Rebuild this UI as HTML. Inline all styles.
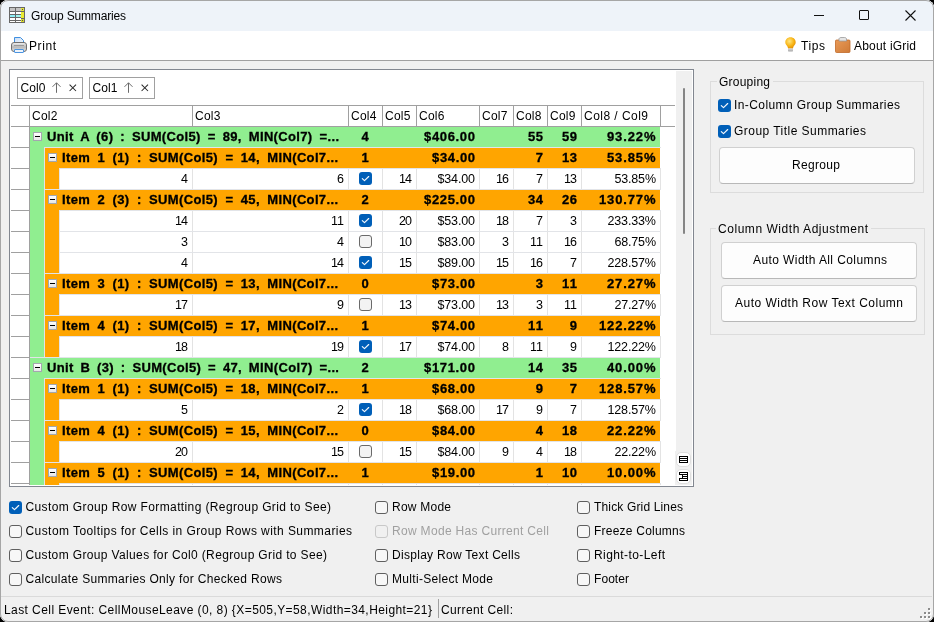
<!DOCTYPE html><html><head><meta charset="utf-8"><style>
html,body{margin:0;padding:0;width:934px;height:622px;overflow:hidden;background:#000}
body{position:relative;font-family:"Liberation Sans",sans-serif}
#w{position:absolute;left:0;top:0;width:934px;height:622px;border-radius:8px;overflow:hidden;background:#f0f0f0;will-change:transform}
#b{position:absolute;left:0;top:0;width:934px;height:622px;border-radius:8px;border:1px solid #a6a6a6;box-sizing:border-box}
</style></head><body><div id="w">
<div style="position:absolute;left:0px;top:0px;width:934px;height:622px;background:#f0f0f0"></div>
<div style="position:absolute;left:0px;top:0px;width:934px;height:31px;background:#eef3f9"></div>
<div style="position:absolute;left:0px;top:31px;width:934px;height:30px;background:#ffffff"></div>
<div style="position:absolute;left:0px;top:60px;width:934px;height:1px;background:#a0a0a0"></div>
<svg style="position:absolute;left:9px;top:7px" width="16" height="16" viewBox="0 0 16 16" shape-rendering="crispEdges">
<rect x="0" y="0" width="16" height="16" fill="#676767"/>
<rect x="1" y="1" width="5" height="3" fill="#c4c4c4"/><rect x="7" y="1" width="5" height="3" fill="#c4c4c4"/>
<rect x="1" y="5" width="5" height="2" fill="#fff"/><rect x="7" y="5" width="5" height="2" fill="#fff"/>
<rect x="1" y="8" width="5" height="2" fill="#8ff0f8"/><rect x="7" y="8" width="5" height="2" fill="#a0f4ee"/>
<rect x="1" y="11" width="5" height="2" fill="#fff"/><rect x="7" y="11" width="5" height="2" fill="#fff"/>
<rect x="1" y="14" width="5" height="1" fill="#fff"/><rect x="7" y="14" width="5" height="1" fill="#fff"/>
<rect x="12" y="1" width="3" height="3" fill="#e6e63a"/><rect x="13" y="2" width="1" height="1" fill="#555"/>
<rect x="12" y="5" width="3" height="6" fill="#eaea30"/>
<rect x="12" y="12" width="3" height="3" fill="#d8d82a"/><rect x="13" y="13" width="1" height="1" fill="#555"/>
</svg>
<div style="position:absolute;left:814px;top:15px;width:10px;height:1px;background:#111"></div>
<div style="position:absolute;left:859px;top:10px;width:10px;height:10px;border:1px solid #111;box-sizing:border-box;border-radius:1px"></div>
<svg style="position:absolute;left:905px;top:10px" width="11" height="11" viewBox="0 0 11 11">
<path d="M0.5 0.5 L10.5 10.5 M10.5 0.5 L0.5 10.5" stroke="#111" stroke-width="1.1"/></svg>
<svg style="position:absolute;left:11px;top:37px" width="16" height="16" viewBox="0 0 16 16">
<defs><linearGradient id="pg" x1="0" y1="0" x2="0" y2="1"><stop offset="0" stop-color="#f4f4f4"/><stop offset="0.5" stop-color="#b9b9b9"/><stop offset="1" stop-color="#e8e8e8"/></linearGradient>
<linearGradient id="pp" x1="0" y1="0" x2="1" y2="1"><stop offset="0" stop-color="#c9ddf5"/><stop offset="1" stop-color="#eef5fd"/></linearGradient></defs>
<path d="M3.5 6 V0.5 H9.5 L12.5 3.5 V6" fill="url(#pp)" stroke="#3f8fe0"/>
<rect x="0.5" y="5.5" width="15" height="9" rx="2.5" fill="url(#pg)" stroke="#707070"/>
<rect x="3" y="8" width="10" height="1" fill="#9a9a9a"/>
<rect x="3.5" y="12.5" width="9" height="3" rx="0.5" fill="#eef4fb" stroke="#4b94e0"/>
</svg>
<svg style="position:absolute;left:785px;top:37px" width="11" height="16" viewBox="0 0 11 16">
<defs><radialGradient id="bg" cx="0.4" cy="0.35" r="0.7"><stop offset="0" stop-color="#ffe680"/><stop offset="0.6" stop-color="#f8b414"/><stop offset="1" stop-color="#e08a00"/></radialGradient></defs>
<path d="M5.5 0.3 C8.6 0.3 10.7 2.5 10.7 5.3 C10.7 7.4 9.2 8.4 8.3 10 L8 11.5 H3 L2.7 10 C1.8 8.4 0.3 7.4 0.3 5.3 C0.3 2.5 2.4 0.3 5.5 0.3 Z" fill="url(#bg)"/>
<rect x="3" y="11.5" width="5" height="3.5" rx="1" fill="#d2d2d2"/><rect x="3" y="12.8" width="5" height="0.8" fill="#a8a8a8"/>
</svg>
<svg style="position:absolute;left:835px;top:37px" width="16" height="16" viewBox="0 0 16 16">
<defs><linearGradient id="cb" x1="0" y1="0" x2="1" y2="1"><stop offset="0" stop-color="#e89a58"/><stop offset="1" stop-color="#cf7a36"/></linearGradient></defs>
<rect x="0.5" y="3" width="14.5" height="12.5" rx="1" fill="url(#cb)" stroke="#c06a28" stroke-width="0.8"/>
<path d="M4 4 V2 C4 1 5 0.5 6 0.5 H9.5 C10.5 0.5 11.5 1 11.5 2 V4 Z" fill="#e4e4e4" stroke="#9a9a9a" stroke-width="0.8"/>
</svg>
<div style="position:absolute;left:9px;top:69px;width:685px;height:418px;background:#fff;border:1px solid #828790;box-sizing:border-box"></div>
<div style="position:absolute;left:676px;top:71px;width:16px;height:414px;background:#f0f0f0"></div>
<div style="position:absolute;left:683px;top:88px;width:2px;height:146px;background:#858585;border-radius:1px"></div>
<div style="position:absolute;left:675px;top:451px;width:1px;height:34px;background:#f0f0f0"></div>
<div style="position:absolute;left:676px;top:452px;width:15px;height:15px;background:#fff;border:1px solid #dedede;box-sizing:border-box;border-radius:5px"></div>
<div style="position:absolute;left:676px;top:469px;width:15px;height:15px;background:#fff;border:1px solid #dedede;box-sizing:border-box;border-radius:5px"></div>
<div style="position:absolute;left:679px;top:456px;width:9px;height:7px;background:#000"></div>
<div style="position:absolute;left:680px;top:457px;width:7px;height:1px;background:#fff"></div>
<div style="position:absolute;left:680px;top:459px;width:7px;height:1px;background:#fff"></div>
<div style="position:absolute;left:680px;top:461px;width:7px;height:1px;background:#fff"></div>
<div style="position:absolute;left:679px;top:472px;width:9px;height:9px;background:#000"></div>
<div style="position:absolute;left:679px;top:475px;width:3px;height:3px;background:#fff"></div>
<div style="position:absolute;left:680px;top:473px;width:7px;height:1px;background:#fff"></div>
<div style="position:absolute;left:683px;top:475px;width:4px;height:1px;background:#fff"></div>
<div style="position:absolute;left:683px;top:477px;width:4px;height:1px;background:#fff"></div>
<div style="position:absolute;left:680px;top:479px;width:7px;height:1px;background:#fff"></div>
<div style="position:absolute;left:17px;top:77px;width:66px;height:22px;border:1px solid #a0a0a0;box-sizing:border-box"></div>
<svg style="position:absolute;left:52px;top:82px" width="10" height="11" viewBox="0 0 10 11">
<path d="M4.5 0.8 V10.8 M0.5 4.8 L4.5 0.8 L8.5 4.8" fill="none" stroke="#6a6a6a" stroke-width="1"/></svg>
<svg style="position:absolute;left:69px;top:84px" width="8" height="8" viewBox="0 0 8 8">
<path d="M0.6 0.6 L7 7 M7 0.6 L0.6 7" fill="none" stroke="#2a2a2a" stroke-width="1.05"/></svg>
<div style="position:absolute;left:89px;top:77px;width:66px;height:22px;border:1px solid #a0a0a0;box-sizing:border-box"></div>
<svg style="position:absolute;left:124px;top:82px" width="10" height="11" viewBox="0 0 10 11">
<path d="M4.5 0.8 V10.8 M0.5 4.8 L4.5 0.8 L8.5 4.8" fill="none" stroke="#6a6a6a" stroke-width="1"/></svg>
<svg style="position:absolute;left:141px;top:84px" width="8" height="8" viewBox="0 0 8 8">
<path d="M0.6 0.6 L7 7 M7 0.6 L0.6 7" fill="none" stroke="#2a2a2a" stroke-width="1.05"/></svg>
<div style="position:absolute;left:11px;top:105px;width:664px;height:1px;background:#a0a0a0"></div>
<div style="position:absolute;left:11px;top:126px;width:664px;height:1px;background:#a0a0a0"></div>
<div style="position:absolute;left:192px;top:105px;width:1px;height:21px;background:#a0a0a0"></div>
<div style="position:absolute;left:348px;top:105px;width:1px;height:21px;background:#a0a0a0"></div>
<div style="position:absolute;left:382px;top:105px;width:1px;height:21px;background:#a0a0a0"></div>
<div style="position:absolute;left:416px;top:105px;width:1px;height:21px;background:#a0a0a0"></div>
<div style="position:absolute;left:479px;top:105px;width:1px;height:21px;background:#a0a0a0"></div>
<div style="position:absolute;left:513px;top:105px;width:1px;height:21px;background:#a0a0a0"></div>
<div style="position:absolute;left:547px;top:105px;width:1px;height:21px;background:#a0a0a0"></div>
<div style="position:absolute;left:581px;top:105px;width:1px;height:21px;background:#a0a0a0"></div>
<div style="position:absolute;left:660px;top:105px;width:1px;height:21px;background:#a0a0a0"></div>
<div style="position:absolute;left:29px;top:105px;width:1px;height:21px;background:#a0a0a0"></div>
<div style="position:absolute;left:11px;top:147px;width:18px;height:1px;background:#a0a0a0"></div>
<div style="position:absolute;left:30px;top:127px;width:630px;height:21px;background:#90ee90"></div>
<div style="position:absolute;left:33px;top:132px;width:9px;height:9px;background:linear-gradient(#fff,#e6e6e6);border:1px solid #a3a7ae;box-sizing:border-box"></div>
<div style="position:absolute;left:35px;top:136px;width:5px;height:1px;background:#000"></div>
<div style="position:absolute;left:44px;top:147px;width:617px;height:1px;background:#e2e4e8"></div>
<div style="position:absolute;left:11px;top:168px;width:18px;height:1px;background:#a0a0a0"></div>
<div style="position:absolute;left:30px;top:148px;width:14px;height:21px;background:#90ee90"></div>
<div style="position:absolute;left:44px;top:148px;width:1px;height:21px;background:#e2e4e8"></div>
<div style="position:absolute;left:45px;top:148px;width:615px;height:21px;background:#ffa500"></div>
<div style="position:absolute;left:48px;top:153px;width:9px;height:9px;background:linear-gradient(#fff,#e6e6e6);border:1px solid #a3a7ae;box-sizing:border-box"></div>
<div style="position:absolute;left:50px;top:157px;width:5px;height:1px;background:#000"></div>
<div style="position:absolute;left:59px;top:168px;width:602px;height:1px;background:#e2e4e8"></div>
<div style="position:absolute;left:11px;top:189px;width:18px;height:1px;background:#a0a0a0"></div>
<div style="position:absolute;left:30px;top:169px;width:14px;height:21px;background:#90ee90"></div>
<div style="position:absolute;left:44px;top:169px;width:1px;height:21px;background:#e2e4e8"></div>
<div style="position:absolute;left:45px;top:169px;width:14px;height:21px;background:#ffa500"></div>
<div style="position:absolute;left:59px;top:169px;width:1px;height:20px;background:#e2e4e8"></div>
<div style="position:absolute;left:192px;top:169px;width:1px;height:20px;background:#e3e3e3"></div>
<div style="position:absolute;left:348px;top:169px;width:1px;height:20px;background:#e3e3e3"></div>
<div style="position:absolute;left:382px;top:169px;width:1px;height:20px;background:#e3e3e3"></div>
<div style="position:absolute;left:416px;top:169px;width:1px;height:20px;background:#e3e3e3"></div>
<div style="position:absolute;left:479px;top:169px;width:1px;height:20px;background:#e3e3e3"></div>
<div style="position:absolute;left:513px;top:169px;width:1px;height:20px;background:#e3e3e3"></div>
<div style="position:absolute;left:547px;top:169px;width:1px;height:20px;background:#e3e3e3"></div>
<div style="position:absolute;left:581px;top:169px;width:1px;height:20px;background:#e3e3e3"></div>
<div style="position:absolute;left:660px;top:169px;width:1px;height:20px;background:#e3e3e3"></div>
<div style="position:absolute;left:359px;top:172px;width:13px;height:13px;background:#005fb8;border-radius:3px"></div>
<svg style="position:absolute;left:359px;top:172px" width="13" height="13" viewBox="0 0 13 13"><path d="M3.3 6.6 L5.5 8.7 L9.7 4.5" fill="none" stroke="#f4f8fc" stroke-width="1.15" stroke-linecap="round" stroke-linejoin="round"/></svg>
<div style="position:absolute;left:44px;top:189px;width:617px;height:1px;background:#e2e4e8"></div>
<div style="position:absolute;left:11px;top:210px;width:18px;height:1px;background:#a0a0a0"></div>
<div style="position:absolute;left:30px;top:190px;width:14px;height:21px;background:#90ee90"></div>
<div style="position:absolute;left:44px;top:190px;width:1px;height:21px;background:#e2e4e8"></div>
<div style="position:absolute;left:45px;top:190px;width:615px;height:21px;background:#ffa500"></div>
<div style="position:absolute;left:48px;top:195px;width:9px;height:9px;background:linear-gradient(#fff,#e6e6e6);border:1px solid #a3a7ae;box-sizing:border-box"></div>
<div style="position:absolute;left:50px;top:199px;width:5px;height:1px;background:#000"></div>
<div style="position:absolute;left:59px;top:210px;width:602px;height:1px;background:#e2e4e8"></div>
<div style="position:absolute;left:11px;top:231px;width:18px;height:1px;background:#a0a0a0"></div>
<div style="position:absolute;left:30px;top:211px;width:14px;height:21px;background:#90ee90"></div>
<div style="position:absolute;left:44px;top:211px;width:1px;height:21px;background:#e2e4e8"></div>
<div style="position:absolute;left:45px;top:211px;width:14px;height:21px;background:#ffa500"></div>
<div style="position:absolute;left:59px;top:211px;width:1px;height:20px;background:#e2e4e8"></div>
<div style="position:absolute;left:192px;top:211px;width:1px;height:20px;background:#e3e3e3"></div>
<div style="position:absolute;left:348px;top:211px;width:1px;height:20px;background:#e3e3e3"></div>
<div style="position:absolute;left:382px;top:211px;width:1px;height:20px;background:#e3e3e3"></div>
<div style="position:absolute;left:416px;top:211px;width:1px;height:20px;background:#e3e3e3"></div>
<div style="position:absolute;left:479px;top:211px;width:1px;height:20px;background:#e3e3e3"></div>
<div style="position:absolute;left:513px;top:211px;width:1px;height:20px;background:#e3e3e3"></div>
<div style="position:absolute;left:547px;top:211px;width:1px;height:20px;background:#e3e3e3"></div>
<div style="position:absolute;left:581px;top:211px;width:1px;height:20px;background:#e3e3e3"></div>
<div style="position:absolute;left:660px;top:211px;width:1px;height:20px;background:#e3e3e3"></div>
<div style="position:absolute;left:359px;top:214px;width:13px;height:13px;background:#005fb8;border-radius:3px"></div>
<svg style="position:absolute;left:359px;top:214px" width="13" height="13" viewBox="0 0 13 13"><path d="M3.3 6.6 L5.5 8.7 L9.7 4.5" fill="none" stroke="#f4f8fc" stroke-width="1.15" stroke-linecap="round" stroke-linejoin="round"/></svg>
<div style="position:absolute;left:59px;top:231px;width:602px;height:1px;background:#e2e4e8"></div>
<div style="position:absolute;left:11px;top:252px;width:18px;height:1px;background:#a0a0a0"></div>
<div style="position:absolute;left:30px;top:232px;width:14px;height:21px;background:#90ee90"></div>
<div style="position:absolute;left:44px;top:232px;width:1px;height:21px;background:#e2e4e8"></div>
<div style="position:absolute;left:45px;top:232px;width:14px;height:21px;background:#ffa500"></div>
<div style="position:absolute;left:59px;top:232px;width:1px;height:20px;background:#e2e4e8"></div>
<div style="position:absolute;left:192px;top:232px;width:1px;height:20px;background:#e3e3e3"></div>
<div style="position:absolute;left:348px;top:232px;width:1px;height:20px;background:#e3e3e3"></div>
<div style="position:absolute;left:382px;top:232px;width:1px;height:20px;background:#e3e3e3"></div>
<div style="position:absolute;left:416px;top:232px;width:1px;height:20px;background:#e3e3e3"></div>
<div style="position:absolute;left:479px;top:232px;width:1px;height:20px;background:#e3e3e3"></div>
<div style="position:absolute;left:513px;top:232px;width:1px;height:20px;background:#e3e3e3"></div>
<div style="position:absolute;left:547px;top:232px;width:1px;height:20px;background:#e3e3e3"></div>
<div style="position:absolute;left:581px;top:232px;width:1px;height:20px;background:#e3e3e3"></div>
<div style="position:absolute;left:660px;top:232px;width:1px;height:20px;background:#e3e3e3"></div>
<div style="position:absolute;left:359px;top:235px;width:13px;height:13px;background:#f3f3f3;border:1px solid #6a6a6a;box-sizing:border-box;border-radius:3px"></div>
<div style="position:absolute;left:59px;top:252px;width:602px;height:1px;background:#e2e4e8"></div>
<div style="position:absolute;left:11px;top:273px;width:18px;height:1px;background:#a0a0a0"></div>
<div style="position:absolute;left:30px;top:253px;width:14px;height:21px;background:#90ee90"></div>
<div style="position:absolute;left:44px;top:253px;width:1px;height:21px;background:#e2e4e8"></div>
<div style="position:absolute;left:45px;top:253px;width:14px;height:21px;background:#ffa500"></div>
<div style="position:absolute;left:59px;top:253px;width:1px;height:20px;background:#e2e4e8"></div>
<div style="position:absolute;left:192px;top:253px;width:1px;height:20px;background:#e3e3e3"></div>
<div style="position:absolute;left:348px;top:253px;width:1px;height:20px;background:#e3e3e3"></div>
<div style="position:absolute;left:382px;top:253px;width:1px;height:20px;background:#e3e3e3"></div>
<div style="position:absolute;left:416px;top:253px;width:1px;height:20px;background:#e3e3e3"></div>
<div style="position:absolute;left:479px;top:253px;width:1px;height:20px;background:#e3e3e3"></div>
<div style="position:absolute;left:513px;top:253px;width:1px;height:20px;background:#e3e3e3"></div>
<div style="position:absolute;left:547px;top:253px;width:1px;height:20px;background:#e3e3e3"></div>
<div style="position:absolute;left:581px;top:253px;width:1px;height:20px;background:#e3e3e3"></div>
<div style="position:absolute;left:660px;top:253px;width:1px;height:20px;background:#e3e3e3"></div>
<div style="position:absolute;left:359px;top:256px;width:13px;height:13px;background:#005fb8;border-radius:3px"></div>
<svg style="position:absolute;left:359px;top:256px" width="13" height="13" viewBox="0 0 13 13"><path d="M3.3 6.6 L5.5 8.7 L9.7 4.5" fill="none" stroke="#f4f8fc" stroke-width="1.15" stroke-linecap="round" stroke-linejoin="round"/></svg>
<div style="position:absolute;left:44px;top:273px;width:617px;height:1px;background:#e2e4e8"></div>
<div style="position:absolute;left:11px;top:294px;width:18px;height:1px;background:#a0a0a0"></div>
<div style="position:absolute;left:30px;top:274px;width:14px;height:21px;background:#90ee90"></div>
<div style="position:absolute;left:44px;top:274px;width:1px;height:21px;background:#e2e4e8"></div>
<div style="position:absolute;left:45px;top:274px;width:615px;height:21px;background:#ffa500"></div>
<div style="position:absolute;left:48px;top:279px;width:9px;height:9px;background:linear-gradient(#fff,#e6e6e6);border:1px solid #a3a7ae;box-sizing:border-box"></div>
<div style="position:absolute;left:50px;top:283px;width:5px;height:1px;background:#000"></div>
<div style="position:absolute;left:59px;top:294px;width:602px;height:1px;background:#e2e4e8"></div>
<div style="position:absolute;left:11px;top:315px;width:18px;height:1px;background:#a0a0a0"></div>
<div style="position:absolute;left:30px;top:295px;width:14px;height:21px;background:#90ee90"></div>
<div style="position:absolute;left:44px;top:295px;width:1px;height:21px;background:#e2e4e8"></div>
<div style="position:absolute;left:45px;top:295px;width:14px;height:21px;background:#ffa500"></div>
<div style="position:absolute;left:59px;top:295px;width:1px;height:20px;background:#e2e4e8"></div>
<div style="position:absolute;left:192px;top:295px;width:1px;height:20px;background:#e3e3e3"></div>
<div style="position:absolute;left:348px;top:295px;width:1px;height:20px;background:#e3e3e3"></div>
<div style="position:absolute;left:382px;top:295px;width:1px;height:20px;background:#e3e3e3"></div>
<div style="position:absolute;left:416px;top:295px;width:1px;height:20px;background:#e3e3e3"></div>
<div style="position:absolute;left:479px;top:295px;width:1px;height:20px;background:#e3e3e3"></div>
<div style="position:absolute;left:513px;top:295px;width:1px;height:20px;background:#e3e3e3"></div>
<div style="position:absolute;left:547px;top:295px;width:1px;height:20px;background:#e3e3e3"></div>
<div style="position:absolute;left:581px;top:295px;width:1px;height:20px;background:#e3e3e3"></div>
<div style="position:absolute;left:660px;top:295px;width:1px;height:20px;background:#e3e3e3"></div>
<div style="position:absolute;left:359px;top:298px;width:13px;height:13px;background:#f3f3f3;border:1px solid #6a6a6a;box-sizing:border-box;border-radius:3px"></div>
<div style="position:absolute;left:44px;top:315px;width:617px;height:1px;background:#e2e4e8"></div>
<div style="position:absolute;left:11px;top:336px;width:18px;height:1px;background:#a0a0a0"></div>
<div style="position:absolute;left:30px;top:316px;width:14px;height:21px;background:#90ee90"></div>
<div style="position:absolute;left:44px;top:316px;width:1px;height:21px;background:#e2e4e8"></div>
<div style="position:absolute;left:45px;top:316px;width:615px;height:21px;background:#ffa500"></div>
<div style="position:absolute;left:48px;top:321px;width:9px;height:9px;background:linear-gradient(#fff,#e6e6e6);border:1px solid #a3a7ae;box-sizing:border-box"></div>
<div style="position:absolute;left:50px;top:325px;width:5px;height:1px;background:#000"></div>
<div style="position:absolute;left:59px;top:336px;width:602px;height:1px;background:#e2e4e8"></div>
<div style="position:absolute;left:11px;top:357px;width:18px;height:1px;background:#a0a0a0"></div>
<div style="position:absolute;left:30px;top:337px;width:14px;height:21px;background:#90ee90"></div>
<div style="position:absolute;left:44px;top:337px;width:1px;height:21px;background:#e2e4e8"></div>
<div style="position:absolute;left:45px;top:337px;width:14px;height:21px;background:#ffa500"></div>
<div style="position:absolute;left:59px;top:337px;width:1px;height:20px;background:#e2e4e8"></div>
<div style="position:absolute;left:192px;top:337px;width:1px;height:20px;background:#e3e3e3"></div>
<div style="position:absolute;left:348px;top:337px;width:1px;height:20px;background:#e3e3e3"></div>
<div style="position:absolute;left:382px;top:337px;width:1px;height:20px;background:#e3e3e3"></div>
<div style="position:absolute;left:416px;top:337px;width:1px;height:20px;background:#e3e3e3"></div>
<div style="position:absolute;left:479px;top:337px;width:1px;height:20px;background:#e3e3e3"></div>
<div style="position:absolute;left:513px;top:337px;width:1px;height:20px;background:#e3e3e3"></div>
<div style="position:absolute;left:547px;top:337px;width:1px;height:20px;background:#e3e3e3"></div>
<div style="position:absolute;left:581px;top:337px;width:1px;height:20px;background:#e3e3e3"></div>
<div style="position:absolute;left:660px;top:337px;width:1px;height:20px;background:#e3e3e3"></div>
<div style="position:absolute;left:359px;top:340px;width:13px;height:13px;background:#005fb8;border-radius:3px"></div>
<svg style="position:absolute;left:359px;top:340px" width="13" height="13" viewBox="0 0 13 13"><path d="M3.3 6.6 L5.5 8.7 L9.7 4.5" fill="none" stroke="#f4f8fc" stroke-width="1.15" stroke-linecap="round" stroke-linejoin="round"/></svg>
<div style="position:absolute;left:29px;top:357px;width:632px;height:1px;background:#e2e4e8"></div>
<div style="position:absolute;left:11px;top:378px;width:18px;height:1px;background:#a0a0a0"></div>
<div style="position:absolute;left:30px;top:358px;width:630px;height:21px;background:#90ee90"></div>
<div style="position:absolute;left:33px;top:363px;width:9px;height:9px;background:linear-gradient(#fff,#e6e6e6);border:1px solid #a3a7ae;box-sizing:border-box"></div>
<div style="position:absolute;left:35px;top:367px;width:5px;height:1px;background:#000"></div>
<div style="position:absolute;left:44px;top:378px;width:617px;height:1px;background:#e2e4e8"></div>
<div style="position:absolute;left:11px;top:399px;width:18px;height:1px;background:#a0a0a0"></div>
<div style="position:absolute;left:30px;top:379px;width:14px;height:21px;background:#90ee90"></div>
<div style="position:absolute;left:44px;top:379px;width:1px;height:21px;background:#e2e4e8"></div>
<div style="position:absolute;left:45px;top:379px;width:615px;height:21px;background:#ffa500"></div>
<div style="position:absolute;left:48px;top:384px;width:9px;height:9px;background:linear-gradient(#fff,#e6e6e6);border:1px solid #a3a7ae;box-sizing:border-box"></div>
<div style="position:absolute;left:50px;top:388px;width:5px;height:1px;background:#000"></div>
<div style="position:absolute;left:59px;top:399px;width:602px;height:1px;background:#e2e4e8"></div>
<div style="position:absolute;left:11px;top:420px;width:18px;height:1px;background:#a0a0a0"></div>
<div style="position:absolute;left:30px;top:400px;width:14px;height:21px;background:#90ee90"></div>
<div style="position:absolute;left:44px;top:400px;width:1px;height:21px;background:#e2e4e8"></div>
<div style="position:absolute;left:45px;top:400px;width:14px;height:21px;background:#ffa500"></div>
<div style="position:absolute;left:59px;top:400px;width:1px;height:20px;background:#e2e4e8"></div>
<div style="position:absolute;left:192px;top:400px;width:1px;height:20px;background:#e3e3e3"></div>
<div style="position:absolute;left:348px;top:400px;width:1px;height:20px;background:#e3e3e3"></div>
<div style="position:absolute;left:382px;top:400px;width:1px;height:20px;background:#e3e3e3"></div>
<div style="position:absolute;left:416px;top:400px;width:1px;height:20px;background:#e3e3e3"></div>
<div style="position:absolute;left:479px;top:400px;width:1px;height:20px;background:#e3e3e3"></div>
<div style="position:absolute;left:513px;top:400px;width:1px;height:20px;background:#e3e3e3"></div>
<div style="position:absolute;left:547px;top:400px;width:1px;height:20px;background:#e3e3e3"></div>
<div style="position:absolute;left:581px;top:400px;width:1px;height:20px;background:#e3e3e3"></div>
<div style="position:absolute;left:660px;top:400px;width:1px;height:20px;background:#e3e3e3"></div>
<div style="position:absolute;left:359px;top:403px;width:13px;height:13px;background:#005fb8;border-radius:3px"></div>
<svg style="position:absolute;left:359px;top:403px" width="13" height="13" viewBox="0 0 13 13"><path d="M3.3 6.6 L5.5 8.7 L9.7 4.5" fill="none" stroke="#f4f8fc" stroke-width="1.15" stroke-linecap="round" stroke-linejoin="round"/></svg>
<div style="position:absolute;left:44px;top:420px;width:617px;height:1px;background:#e2e4e8"></div>
<div style="position:absolute;left:11px;top:441px;width:18px;height:1px;background:#a0a0a0"></div>
<div style="position:absolute;left:30px;top:421px;width:14px;height:21px;background:#90ee90"></div>
<div style="position:absolute;left:44px;top:421px;width:1px;height:21px;background:#e2e4e8"></div>
<div style="position:absolute;left:45px;top:421px;width:615px;height:21px;background:#ffa500"></div>
<div style="position:absolute;left:48px;top:426px;width:9px;height:9px;background:linear-gradient(#fff,#e6e6e6);border:1px solid #a3a7ae;box-sizing:border-box"></div>
<div style="position:absolute;left:50px;top:430px;width:5px;height:1px;background:#000"></div>
<div style="position:absolute;left:59px;top:441px;width:602px;height:1px;background:#e2e4e8"></div>
<div style="position:absolute;left:11px;top:462px;width:18px;height:1px;background:#a0a0a0"></div>
<div style="position:absolute;left:30px;top:442px;width:14px;height:21px;background:#90ee90"></div>
<div style="position:absolute;left:44px;top:442px;width:1px;height:21px;background:#e2e4e8"></div>
<div style="position:absolute;left:45px;top:442px;width:14px;height:21px;background:#ffa500"></div>
<div style="position:absolute;left:59px;top:442px;width:1px;height:20px;background:#e2e4e8"></div>
<div style="position:absolute;left:192px;top:442px;width:1px;height:20px;background:#e3e3e3"></div>
<div style="position:absolute;left:348px;top:442px;width:1px;height:20px;background:#e3e3e3"></div>
<div style="position:absolute;left:382px;top:442px;width:1px;height:20px;background:#e3e3e3"></div>
<div style="position:absolute;left:416px;top:442px;width:1px;height:20px;background:#e3e3e3"></div>
<div style="position:absolute;left:479px;top:442px;width:1px;height:20px;background:#e3e3e3"></div>
<div style="position:absolute;left:513px;top:442px;width:1px;height:20px;background:#e3e3e3"></div>
<div style="position:absolute;left:547px;top:442px;width:1px;height:20px;background:#e3e3e3"></div>
<div style="position:absolute;left:581px;top:442px;width:1px;height:20px;background:#e3e3e3"></div>
<div style="position:absolute;left:660px;top:442px;width:1px;height:20px;background:#e3e3e3"></div>
<div style="position:absolute;left:359px;top:445px;width:13px;height:13px;background:#f3f3f3;border:1px solid #6a6a6a;box-sizing:border-box;border-radius:3px"></div>
<div style="position:absolute;left:44px;top:462px;width:617px;height:1px;background:#e2e4e8"></div>
<div style="position:absolute;left:11px;top:483px;width:18px;height:1px;background:#a0a0a0"></div>
<div style="position:absolute;left:30px;top:463px;width:14px;height:21px;background:#90ee90"></div>
<div style="position:absolute;left:44px;top:463px;width:1px;height:21px;background:#e2e4e8"></div>
<div style="position:absolute;left:45px;top:463px;width:615px;height:21px;background:#ffa500"></div>
<div style="position:absolute;left:48px;top:468px;width:9px;height:9px;background:linear-gradient(#fff,#e6e6e6);border:1px solid #a3a7ae;box-sizing:border-box"></div>
<div style="position:absolute;left:50px;top:472px;width:5px;height:1px;background:#000"></div>
<div style="position:absolute;left:59px;top:483px;width:602px;height:1px;background:#e2e4e8"></div>
<div style="position:absolute;left:30px;top:484px;width:14px;height:1px;background:#90ee90"></div>
<div style="position:absolute;left:44px;top:484px;width:1px;height:1px;background:#e2e4e8"></div>
<div style="position:absolute;left:45px;top:484px;width:14px;height:1px;background:#ffa500"></div>
<div style="position:absolute;left:59px;top:484px;width:1px;height:1px;background:#e2e4e8"></div>
<div style="position:absolute;left:192px;top:484px;width:1px;height:1px;background:#e3e3e3"></div>
<div style="position:absolute;left:348px;top:484px;width:1px;height:1px;background:#e3e3e3"></div>
<div style="position:absolute;left:382px;top:484px;width:1px;height:1px;background:#e3e3e3"></div>
<div style="position:absolute;left:416px;top:484px;width:1px;height:1px;background:#e3e3e3"></div>
<div style="position:absolute;left:479px;top:484px;width:1px;height:1px;background:#e3e3e3"></div>
<div style="position:absolute;left:513px;top:484px;width:1px;height:1px;background:#e3e3e3"></div>
<div style="position:absolute;left:547px;top:484px;width:1px;height:1px;background:#e3e3e3"></div>
<div style="position:absolute;left:581px;top:484px;width:1px;height:1px;background:#e3e3e3"></div>
<div style="position:absolute;left:660px;top:484px;width:1px;height:1px;background:#e3e3e3"></div>
<div style="position:absolute;left:29px;top:127px;width:1px;height:358px;background:#a0a0a0"></div>
<div style="position:absolute;left:710px;top:81px;width:214px;height:112px;border:1px solid #dcdcdc;box-sizing:border-box"></div>
<div style="position:absolute;left:717px;top:79px;width:56px;height:5px;background:#f0f0f0"></div>
<div style="position:absolute;left:718px;top:99px;width:13px;height:13px;background:#005fb8;border-radius:3px"></div>
<svg style="position:absolute;left:718px;top:99px" width="13" height="13" viewBox="0 0 13 13"><path d="M3.3 6.6 L5.5 8.7 L9.7 4.5" fill="none" stroke="#f4f8fc" stroke-width="1.15" stroke-linecap="round" stroke-linejoin="round"/></svg>
<div style="position:absolute;left:718px;top:125px;width:13px;height:13px;background:#005fb8;border-radius:3px"></div>
<svg style="position:absolute;left:718px;top:125px" width="13" height="13" viewBox="0 0 13 13"><path d="M3.3 6.6 L5.5 8.7 L9.7 4.5" fill="none" stroke="#f4f8fc" stroke-width="1.15" stroke-linecap="round" stroke-linejoin="round"/></svg>
<div style="position:absolute;left:719px;top:147px;width:196px;height:37px;background:#fdfdfd;border:1px solid #d0d0d0;border-bottom-color:#b8b8b8;box-sizing:border-box;border-radius:4px"></div>
<div style="position:absolute;left:710px;top:228px;width:215px;height:107px;border:1px solid #dcdcdc;box-sizing:border-box"></div>
<div style="position:absolute;left:716px;top:226px;width:155px;height:5px;background:#f0f0f0"></div>
<div style="position:absolute;left:721px;top:242px;width:196px;height:37px;background:#fdfdfd;border:1px solid #d0d0d0;border-bottom-color:#b8b8b8;box-sizing:border-box;border-radius:4px"></div>
<div style="position:absolute;left:721px;top:285px;width:196px;height:37px;background:#fdfdfd;border:1px solid #d0d0d0;border-bottom-color:#b8b8b8;box-sizing:border-box;border-radius:4px"></div>
<div style="position:absolute;left:9px;top:501px;width:13px;height:13px;background:#005fb8;border-radius:3px"></div>
<svg style="position:absolute;left:9px;top:501px" width="13" height="13" viewBox="0 0 13 13"><path d="M3.3 6.6 L5.5 8.7 L9.7 4.5" fill="none" stroke="#f4f8fc" stroke-width="1.15" stroke-linecap="round" stroke-linejoin="round"/></svg>
<div style="position:absolute;left:9px;top:525px;width:13px;height:13px;background:#f7f7f7;border:1px solid #5f5f5f;box-sizing:border-box;border-radius:3px"></div>
<div style="position:absolute;left:9px;top:549px;width:13px;height:13px;background:#f7f7f7;border:1px solid #5f5f5f;box-sizing:border-box;border-radius:3px"></div>
<div style="position:absolute;left:9px;top:573px;width:13px;height:13px;background:#f7f7f7;border:1px solid #5f5f5f;box-sizing:border-box;border-radius:3px"></div>
<div style="position:absolute;left:375px;top:501px;width:13px;height:13px;background:#f7f7f7;border:1px solid #5f5f5f;box-sizing:border-box;border-radius:3px"></div>
<div style="position:absolute;left:375px;top:525px;width:13px;height:13px;background:#f0f0f0;border:1px solid #c8c8c8;box-sizing:border-box;border-radius:3px"></div>
<div style="position:absolute;left:375px;top:549px;width:13px;height:13px;background:#f7f7f7;border:1px solid #5f5f5f;box-sizing:border-box;border-radius:3px"></div>
<div style="position:absolute;left:375px;top:573px;width:13px;height:13px;background:#f7f7f7;border:1px solid #5f5f5f;box-sizing:border-box;border-radius:3px"></div>
<div style="position:absolute;left:577px;top:501px;width:13px;height:13px;background:#f7f7f7;border:1px solid #5f5f5f;box-sizing:border-box;border-radius:3px"></div>
<div style="position:absolute;left:577px;top:525px;width:13px;height:13px;background:#f7f7f7;border:1px solid #5f5f5f;box-sizing:border-box;border-radius:3px"></div>
<div style="position:absolute;left:577px;top:549px;width:13px;height:13px;background:#f7f7f7;border:1px solid #5f5f5f;box-sizing:border-box;border-radius:3px"></div>
<div style="position:absolute;left:577px;top:573px;width:13px;height:13px;background:#f7f7f7;border:1px solid #5f5f5f;box-sizing:border-box;border-radius:3px"></div>
<div style="position:absolute;left:1px;top:596px;width:931px;height:1px;background:#dadada"></div>
<div style="position:absolute;left:438px;top:599px;width:1px;height:19px;background:#a0a0a0"></div>
<div style="position:absolute;left:929px;top:609px;width:2px;height:2px;background:#ffffff"></div>
<div style="position:absolute;left:928px;top:608px;width:2px;height:2px;background:#8c8c8c"></div>
<div style="position:absolute;left:925px;top:613px;width:2px;height:2px;background:#ffffff"></div>
<div style="position:absolute;left:924px;top:612px;width:2px;height:2px;background:#8c8c8c"></div>
<div style="position:absolute;left:929px;top:613px;width:2px;height:2px;background:#ffffff"></div>
<div style="position:absolute;left:928px;top:612px;width:2px;height:2px;background:#8c8c8c"></div>
<div style="position:absolute;left:921px;top:617px;width:2px;height:2px;background:#ffffff"></div>
<div style="position:absolute;left:920px;top:616px;width:2px;height:2px;background:#8c8c8c"></div>
<div style="position:absolute;left:925px;top:617px;width:2px;height:2px;background:#ffffff"></div>
<div style="position:absolute;left:924px;top:616px;width:2px;height:2px;background:#8c8c8c"></div>
<div style="position:absolute;left:929px;top:617px;width:2px;height:2px;background:#ffffff"></div>
<div style="position:absolute;left:928px;top:616px;width:2px;height:2px;background:#8c8c8c"></div>
<div style="position:absolute;left:31.00px;top:9.84px;font:12px 'Liberation Sans', sans-serif;line-height:12px;white-space:pre;color:#000;letter-spacing:-0.170px;word-spacing:0.000px;">Group Summaries</div>
<div style="position:absolute;left:29.00px;top:39.84px;font:12px 'Liberation Sans', sans-serif;line-height:12px;white-space:pre;color:#000;letter-spacing:0.578px;word-spacing:0.000px;">Print</div>
<div style="position:absolute;left:801.00px;top:39.84px;font:12px 'Liberation Sans', sans-serif;line-height:12px;white-space:pre;color:#000;letter-spacing:0.589px;word-spacing:0.000px;">Tips</div>
<div style="position:absolute;left:854.00px;top:39.84px;font:12px 'Liberation Sans', sans-serif;line-height:12px;white-space:pre;color:#000;letter-spacing:0.197px;word-spacing:0.000px;">About iGrid</div>
<div style="position:absolute;left:20.50px;top:81.84px;font:12px 'Liberation Sans', sans-serif;line-height:12px;white-space:pre;color:#000;letter-spacing:0.104px;word-spacing:0.000px;">Col0</div>
<div style="position:absolute;left:92.50px;top:81.84px;font:12px 'Liberation Sans', sans-serif;line-height:12px;white-space:pre;color:#000;letter-spacing:0.104px;word-spacing:0.000px;">Col1</div>
<div style="position:absolute;left:32.00px;top:109.84px;font:12px 'Liberation Sans', sans-serif;line-height:12px;white-space:pre;color:#000;letter-spacing:0.237px;word-spacing:0.000px;">Col2</div>
<div style="position:absolute;left:195.00px;top:109.84px;font:12px 'Liberation Sans', sans-serif;line-height:12px;white-space:pre;color:#000;letter-spacing:0.237px;word-spacing:0.000px;">Col3</div>
<div style="position:absolute;left:351.00px;top:109.84px;font:12px 'Liberation Sans', sans-serif;line-height:12px;white-space:pre;color:#000;letter-spacing:0.237px;word-spacing:0.000px;">Col4</div>
<div style="position:absolute;left:385.00px;top:109.84px;font:12px 'Liberation Sans', sans-serif;line-height:12px;white-space:pre;color:#000;letter-spacing:0.237px;word-spacing:0.000px;">Col5</div>
<div style="position:absolute;left:419.00px;top:109.84px;font:12px 'Liberation Sans', sans-serif;line-height:12px;white-space:pre;color:#000;letter-spacing:0.237px;word-spacing:0.000px;">Col6</div>
<div style="position:absolute;left:482.00px;top:109.84px;font:12px 'Liberation Sans', sans-serif;line-height:12px;white-space:pre;color:#000;letter-spacing:0.237px;word-spacing:0.000px;">Col7</div>
<div style="position:absolute;left:516.00px;top:109.84px;font:12px 'Liberation Sans', sans-serif;line-height:12px;white-space:pre;color:#000;letter-spacing:0.237px;word-spacing:0.000px;">Col8</div>
<div style="position:absolute;left:550.00px;top:109.84px;font:12px 'Liberation Sans', sans-serif;line-height:12px;white-space:pre;color:#000;letter-spacing:0.237px;word-spacing:0.000px;">Col9</div>
<div style="position:absolute;left:584.00px;top:109.84px;font:12px 'Liberation Sans', sans-serif;line-height:12px;white-space:pre;color:#000;letter-spacing:0.463px;word-spacing:0.000px;">Col8 / Col9</div>
<div style="position:absolute;left:47.00px;top:130.00px;font:bold 13px 'Liberation Sans', sans-serif;line-height:13px;white-space:pre;color:#000;letter-spacing:0.350px;word-spacing:3.002px;-webkit-text-stroke:0.3px #000;">Unit A (6) : SUM(Col5) = 89, MIN(Col7) =...</div>
<div style="position:absolute;left:361.38px;top:130.00px;font:bold 13px 'Liberation Sans', sans-serif;line-height:13px;white-space:pre;color:#000;letter-spacing:0.000px;word-spacing:0.000px;-webkit-text-stroke:0.3px #000;">4</div>
<div style="position:absolute;left:424.00px;top:130.00px;font:bold 13px 'Liberation Sans', sans-serif;line-height:13px;white-space:pre;color:#000;letter-spacing:0.667px;word-spacing:0.000px;-webkit-text-stroke:0.3px #000;">$406.00</div>
<div style="position:absolute;left:528.00px;top:130.00px;font:bold 13px 'Liberation Sans', sans-serif;line-height:13px;white-space:pre;color:#000;letter-spacing:0.531px;word-spacing:0.000px;-webkit-text-stroke:0.3px #000;">55</div>
<div style="position:absolute;left:562.00px;top:130.00px;font:bold 13px 'Liberation Sans', sans-serif;line-height:13px;white-space:pre;color:#000;letter-spacing:0.531px;word-spacing:0.000px;-webkit-text-stroke:0.3px #000;">59</div>
<div style="position:absolute;left:607.00px;top:130.00px;font:bold 13px 'Liberation Sans', sans-serif;line-height:13px;white-space:pre;color:#000;letter-spacing:0.881px;word-spacing:0.000px;-webkit-text-stroke:0.3px #000;">93.22%</div>
<div style="position:absolute;left:62.00px;top:151.00px;font:bold 13px 'Liberation Sans', sans-serif;line-height:13px;white-space:pre;color:#000;letter-spacing:0.350px;word-spacing:3.476px;-webkit-text-stroke:0.3px #000;">Item 1 (1) : SUM(Col5) = 14, MIN(Col7...</div>
<div style="position:absolute;left:361.38px;top:151.00px;font:bold 13px 'Liberation Sans', sans-serif;line-height:13px;white-space:pre;color:#000;letter-spacing:0.000px;word-spacing:0.000px;-webkit-text-stroke:0.3px #000;">1</div>
<div style="position:absolute;left:432.00px;top:151.00px;font:bold 13px 'Liberation Sans', sans-serif;line-height:13px;white-space:pre;color:#000;letter-spacing:0.647px;word-spacing:0.000px;-webkit-text-stroke:0.3px #000;">$34.00</div>
<div style="position:absolute;left:535.77px;top:151.00px;font:bold 13px 'Liberation Sans', sans-serif;line-height:13px;white-space:pre;color:#000;letter-spacing:0.000px;word-spacing:0.000px;-webkit-text-stroke:0.3px #000;">7</div>
<div style="position:absolute;left:562.00px;top:151.00px;font:bold 13px 'Liberation Sans', sans-serif;line-height:13px;white-space:pre;color:#000;letter-spacing:0.531px;word-spacing:0.000px;-webkit-text-stroke:0.3px #000;">13</div>
<div style="position:absolute;left:607.00px;top:151.00px;font:bold 13px 'Liberation Sans', sans-serif;line-height:13px;white-space:pre;color:#000;letter-spacing:0.881px;word-spacing:0.000px;-webkit-text-stroke:0.3px #000;">53.85%</div>
<div style="position:absolute;left:181.05px;top:173.42px;font:12.5px 'Liberation Sans', sans-serif;line-height:12px;white-space:pre;color:#000;letter-spacing:0.000px;word-spacing:0.000px;">4</div>
<div style="position:absolute;left:337.05px;top:173.42px;font:12.5px 'Liberation Sans', sans-serif;line-height:12px;white-space:pre;color:#000;letter-spacing:0.000px;word-spacing:0.000px;">6</div>
<div style="position:absolute;left:399.00px;top:173.42px;font:12.5px 'Liberation Sans', sans-serif;line-height:12px;white-space:pre;color:#000;letter-spacing:-0.906px;word-spacing:0.000px;">14</div>
<div style="position:absolute;left:437.50px;top:173.42px;font:12.5px 'Liberation Sans', sans-serif;line-height:12px;white-space:pre;color:#000;letter-spacing:-0.147px;word-spacing:0.000px;">$34.00</div>
<div style="position:absolute;left:496.00px;top:173.42px;font:12.5px 'Liberation Sans', sans-serif;line-height:12px;white-space:pre;color:#000;letter-spacing:-0.906px;word-spacing:0.000px;">16</div>
<div style="position:absolute;left:536.05px;top:173.42px;font:12.5px 'Liberation Sans', sans-serif;line-height:12px;white-space:pre;color:#000;letter-spacing:0.000px;word-spacing:0.000px;">7</div>
<div style="position:absolute;left:564.00px;top:173.42px;font:12.5px 'Liberation Sans', sans-serif;line-height:12px;white-space:pre;color:#000;letter-spacing:-0.906px;word-spacing:0.000px;">13</div>
<div style="position:absolute;left:614.50px;top:173.42px;font:12.5px 'Liberation Sans', sans-serif;line-height:12px;white-space:pre;color:#000;letter-spacing:-0.181px;word-spacing:0.000px;">53.85%</div>
<div style="position:absolute;left:62.00px;top:193.00px;font:bold 13px 'Liberation Sans', sans-serif;line-height:13px;white-space:pre;color:#000;letter-spacing:0.350px;word-spacing:3.476px;-webkit-text-stroke:0.3px #000;">Item 2 (3) : SUM(Col5) = 45, MIN(Col7...</div>
<div style="position:absolute;left:361.38px;top:193.00px;font:bold 13px 'Liberation Sans', sans-serif;line-height:13px;white-space:pre;color:#000;letter-spacing:0.000px;word-spacing:0.000px;-webkit-text-stroke:0.3px #000;">2</div>
<div style="position:absolute;left:424.00px;top:193.00px;font:bold 13px 'Liberation Sans', sans-serif;line-height:13px;white-space:pre;color:#000;letter-spacing:0.667px;word-spacing:0.000px;-webkit-text-stroke:0.3px #000;">$225.00</div>
<div style="position:absolute;left:528.00px;top:193.00px;font:bold 13px 'Liberation Sans', sans-serif;line-height:13px;white-space:pre;color:#000;letter-spacing:0.531px;word-spacing:0.000px;-webkit-text-stroke:0.3px #000;">34</div>
<div style="position:absolute;left:562.00px;top:193.00px;font:bold 13px 'Liberation Sans', sans-serif;line-height:13px;white-space:pre;color:#000;letter-spacing:0.531px;word-spacing:0.000px;-webkit-text-stroke:0.3px #000;">26</div>
<div style="position:absolute;left:599.00px;top:193.00px;font:bold 13px 'Liberation Sans', sans-serif;line-height:13px;white-space:pre;color:#000;letter-spacing:0.862px;word-spacing:0.000px;-webkit-text-stroke:0.3px #000;">130.77%</div>
<div style="position:absolute;left:175.00px;top:215.42px;font:12.5px 'Liberation Sans', sans-serif;line-height:12px;white-space:pre;color:#000;letter-spacing:-0.906px;word-spacing:0.000px;">14</div>
<div style="position:absolute;left:331.00px;top:215.42px;font:12.5px 'Liberation Sans', sans-serif;line-height:12px;white-space:pre;color:#000;letter-spacing:0.016px;word-spacing:0.000px;">11</div>
<div style="position:absolute;left:399.00px;top:215.42px;font:12.5px 'Liberation Sans', sans-serif;line-height:12px;white-space:pre;color:#000;letter-spacing:-0.906px;word-spacing:0.000px;">20</div>
<div style="position:absolute;left:437.50px;top:215.42px;font:12.5px 'Liberation Sans', sans-serif;line-height:12px;white-space:pre;color:#000;letter-spacing:-0.147px;word-spacing:0.000px;">$53.00</div>
<div style="position:absolute;left:496.00px;top:215.42px;font:12.5px 'Liberation Sans', sans-serif;line-height:12px;white-space:pre;color:#000;letter-spacing:-0.906px;word-spacing:0.000px;">18</div>
<div style="position:absolute;left:536.05px;top:215.42px;font:12.5px 'Liberation Sans', sans-serif;line-height:12px;white-space:pre;color:#000;letter-spacing:0.000px;word-spacing:0.000px;">7</div>
<div style="position:absolute;left:570.05px;top:215.42px;font:12.5px 'Liberation Sans', sans-serif;line-height:12px;white-space:pre;color:#000;letter-spacing:0.000px;word-spacing:0.000px;">3</div>
<div style="position:absolute;left:607.50px;top:215.42px;font:12.5px 'Liberation Sans', sans-serif;line-height:12px;white-space:pre;color:#000;letter-spacing:-0.143px;word-spacing:0.000px;">233.33%</div>
<div style="position:absolute;left:181.05px;top:236.42px;font:12.5px 'Liberation Sans', sans-serif;line-height:12px;white-space:pre;color:#000;letter-spacing:0.000px;word-spacing:0.000px;">3</div>
<div style="position:absolute;left:337.05px;top:236.42px;font:12.5px 'Liberation Sans', sans-serif;line-height:12px;white-space:pre;color:#000;letter-spacing:0.000px;word-spacing:0.000px;">4</div>
<div style="position:absolute;left:399.00px;top:236.42px;font:12.5px 'Liberation Sans', sans-serif;line-height:12px;white-space:pre;color:#000;letter-spacing:-0.906px;word-spacing:0.000px;">10</div>
<div style="position:absolute;left:437.50px;top:236.42px;font:12.5px 'Liberation Sans', sans-serif;line-height:12px;white-space:pre;color:#000;letter-spacing:-0.147px;word-spacing:0.000px;">$83.00</div>
<div style="position:absolute;left:502.05px;top:236.42px;font:12.5px 'Liberation Sans', sans-serif;line-height:12px;white-space:pre;color:#000;letter-spacing:0.000px;word-spacing:0.000px;">3</div>
<div style="position:absolute;left:530.00px;top:236.42px;font:12.5px 'Liberation Sans', sans-serif;line-height:12px;white-space:pre;color:#000;letter-spacing:0.016px;word-spacing:0.000px;">11</div>
<div style="position:absolute;left:564.00px;top:236.42px;font:12.5px 'Liberation Sans', sans-serif;line-height:12px;white-space:pre;color:#000;letter-spacing:-0.906px;word-spacing:0.000px;">16</div>
<div style="position:absolute;left:614.50px;top:236.42px;font:12.5px 'Liberation Sans', sans-serif;line-height:12px;white-space:pre;color:#000;letter-spacing:-0.181px;word-spacing:0.000px;">68.75%</div>
<div style="position:absolute;left:181.05px;top:257.42px;font:12.5px 'Liberation Sans', sans-serif;line-height:12px;white-space:pre;color:#000;letter-spacing:0.000px;word-spacing:0.000px;">4</div>
<div style="position:absolute;left:331.00px;top:257.42px;font:12.5px 'Liberation Sans', sans-serif;line-height:12px;white-space:pre;color:#000;letter-spacing:-0.906px;word-spacing:0.000px;">14</div>
<div style="position:absolute;left:399.00px;top:257.42px;font:12.5px 'Liberation Sans', sans-serif;line-height:12px;white-space:pre;color:#000;letter-spacing:-0.906px;word-spacing:0.000px;">15</div>
<div style="position:absolute;left:437.50px;top:257.42px;font:12.5px 'Liberation Sans', sans-serif;line-height:12px;white-space:pre;color:#000;letter-spacing:-0.147px;word-spacing:0.000px;">$89.00</div>
<div style="position:absolute;left:496.00px;top:257.42px;font:12.5px 'Liberation Sans', sans-serif;line-height:12px;white-space:pre;color:#000;letter-spacing:-0.906px;word-spacing:0.000px;">15</div>
<div style="position:absolute;left:530.00px;top:257.42px;font:12.5px 'Liberation Sans', sans-serif;line-height:12px;white-space:pre;color:#000;letter-spacing:-0.906px;word-spacing:0.000px;">16</div>
<div style="position:absolute;left:570.05px;top:257.42px;font:12.5px 'Liberation Sans', sans-serif;line-height:12px;white-space:pre;color:#000;letter-spacing:0.000px;word-spacing:0.000px;">7</div>
<div style="position:absolute;left:607.50px;top:257.42px;font:12.5px 'Liberation Sans', sans-serif;line-height:12px;white-space:pre;color:#000;letter-spacing:-0.143px;word-spacing:0.000px;">228.57%</div>
<div style="position:absolute;left:62.00px;top:277.00px;font:bold 13px 'Liberation Sans', sans-serif;line-height:13px;white-space:pre;color:#000;letter-spacing:0.350px;word-spacing:3.476px;-webkit-text-stroke:0.3px #000;">Item 3 (1) : SUM(Col5) = 13, MIN(Col7...</div>
<div style="position:absolute;left:361.38px;top:277.00px;font:bold 13px 'Liberation Sans', sans-serif;line-height:13px;white-space:pre;color:#000;letter-spacing:0.000px;word-spacing:0.000px;-webkit-text-stroke:0.3px #000;">0</div>
<div style="position:absolute;left:432.00px;top:277.00px;font:bold 13px 'Liberation Sans', sans-serif;line-height:13px;white-space:pre;color:#000;letter-spacing:0.647px;word-spacing:0.000px;-webkit-text-stroke:0.3px #000;">$73.00</div>
<div style="position:absolute;left:535.77px;top:277.00px;font:bold 13px 'Liberation Sans', sans-serif;line-height:13px;white-space:pre;color:#000;letter-spacing:0.000px;word-spacing:0.000px;-webkit-text-stroke:0.3px #000;">3</div>
<div style="position:absolute;left:562.00px;top:277.00px;font:bold 13px 'Liberation Sans', sans-serif;line-height:13px;white-space:pre;color:#000;letter-spacing:1.250px;word-spacing:0.000px;-webkit-text-stroke:0.3px #000;">11</div>
<div style="position:absolute;left:607.00px;top:277.00px;font:bold 13px 'Liberation Sans', sans-serif;line-height:13px;white-space:pre;color:#000;letter-spacing:0.881px;word-spacing:0.000px;-webkit-text-stroke:0.3px #000;">27.27%</div>
<div style="position:absolute;left:175.00px;top:299.42px;font:12.5px 'Liberation Sans', sans-serif;line-height:12px;white-space:pre;color:#000;letter-spacing:-0.906px;word-spacing:0.000px;">17</div>
<div style="position:absolute;left:337.05px;top:299.42px;font:12.5px 'Liberation Sans', sans-serif;line-height:12px;white-space:pre;color:#000;letter-spacing:0.000px;word-spacing:0.000px;">9</div>
<div style="position:absolute;left:399.00px;top:299.42px;font:12.5px 'Liberation Sans', sans-serif;line-height:12px;white-space:pre;color:#000;letter-spacing:-0.906px;word-spacing:0.000px;">13</div>
<div style="position:absolute;left:437.50px;top:299.42px;font:12.5px 'Liberation Sans', sans-serif;line-height:12px;white-space:pre;color:#000;letter-spacing:-0.147px;word-spacing:0.000px;">$73.00</div>
<div style="position:absolute;left:496.00px;top:299.42px;font:12.5px 'Liberation Sans', sans-serif;line-height:12px;white-space:pre;color:#000;letter-spacing:-0.906px;word-spacing:0.000px;">13</div>
<div style="position:absolute;left:536.05px;top:299.42px;font:12.5px 'Liberation Sans', sans-serif;line-height:12px;white-space:pre;color:#000;letter-spacing:0.000px;word-spacing:0.000px;">3</div>
<div style="position:absolute;left:564.00px;top:299.42px;font:12.5px 'Liberation Sans', sans-serif;line-height:12px;white-space:pre;color:#000;letter-spacing:0.016px;word-spacing:0.000px;">11</div>
<div style="position:absolute;left:614.50px;top:299.42px;font:12.5px 'Liberation Sans', sans-serif;line-height:12px;white-space:pre;color:#000;letter-spacing:-0.181px;word-spacing:0.000px;">27.27%</div>
<div style="position:absolute;left:62.00px;top:319.00px;font:bold 13px 'Liberation Sans', sans-serif;line-height:13px;white-space:pre;color:#000;letter-spacing:0.350px;word-spacing:3.476px;-webkit-text-stroke:0.3px #000;">Item 4 (1) : SUM(Col5) = 17, MIN(Col7...</div>
<div style="position:absolute;left:361.38px;top:319.00px;font:bold 13px 'Liberation Sans', sans-serif;line-height:13px;white-space:pre;color:#000;letter-spacing:0.000px;word-spacing:0.000px;-webkit-text-stroke:0.3px #000;">1</div>
<div style="position:absolute;left:432.00px;top:319.00px;font:bold 13px 'Liberation Sans', sans-serif;line-height:13px;white-space:pre;color:#000;letter-spacing:0.647px;word-spacing:0.000px;-webkit-text-stroke:0.3px #000;">$74.00</div>
<div style="position:absolute;left:528.00px;top:319.00px;font:bold 13px 'Liberation Sans', sans-serif;line-height:13px;white-space:pre;color:#000;letter-spacing:1.250px;word-spacing:0.000px;-webkit-text-stroke:0.3px #000;">11</div>
<div style="position:absolute;left:569.77px;top:319.00px;font:bold 13px 'Liberation Sans', sans-serif;line-height:13px;white-space:pre;color:#000;letter-spacing:0.000px;word-spacing:0.000px;-webkit-text-stroke:0.3px #000;">9</div>
<div style="position:absolute;left:599.00px;top:319.00px;font:bold 13px 'Liberation Sans', sans-serif;line-height:13px;white-space:pre;color:#000;letter-spacing:0.862px;word-spacing:0.000px;-webkit-text-stroke:0.3px #000;">122.22%</div>
<div style="position:absolute;left:175.00px;top:341.42px;font:12.5px 'Liberation Sans', sans-serif;line-height:12px;white-space:pre;color:#000;letter-spacing:-0.906px;word-spacing:0.000px;">18</div>
<div style="position:absolute;left:331.00px;top:341.42px;font:12.5px 'Liberation Sans', sans-serif;line-height:12px;white-space:pre;color:#000;letter-spacing:-0.906px;word-spacing:0.000px;">19</div>
<div style="position:absolute;left:399.00px;top:341.42px;font:12.5px 'Liberation Sans', sans-serif;line-height:12px;white-space:pre;color:#000;letter-spacing:-0.906px;word-spacing:0.000px;">17</div>
<div style="position:absolute;left:437.50px;top:341.42px;font:12.5px 'Liberation Sans', sans-serif;line-height:12px;white-space:pre;color:#000;letter-spacing:-0.147px;word-spacing:0.000px;">$74.00</div>
<div style="position:absolute;left:502.05px;top:341.42px;font:12.5px 'Liberation Sans', sans-serif;line-height:12px;white-space:pre;color:#000;letter-spacing:0.000px;word-spacing:0.000px;">8</div>
<div style="position:absolute;left:530.00px;top:341.42px;font:12.5px 'Liberation Sans', sans-serif;line-height:12px;white-space:pre;color:#000;letter-spacing:0.016px;word-spacing:0.000px;">11</div>
<div style="position:absolute;left:570.05px;top:341.42px;font:12.5px 'Liberation Sans', sans-serif;line-height:12px;white-space:pre;color:#000;letter-spacing:0.000px;word-spacing:0.000px;">9</div>
<div style="position:absolute;left:607.50px;top:341.42px;font:12.5px 'Liberation Sans', sans-serif;line-height:12px;white-space:pre;color:#000;letter-spacing:-0.143px;word-spacing:0.000px;">122.22%</div>
<div style="position:absolute;left:47.00px;top:361.00px;font:bold 13px 'Liberation Sans', sans-serif;line-height:13px;white-space:pre;color:#000;letter-spacing:0.350px;word-spacing:2.881px;-webkit-text-stroke:0.3px #000;">Unit B (3) : SUM(Col5) = 47, MIN(Col7) =...</div>
<div style="position:absolute;left:361.38px;top:361.00px;font:bold 13px 'Liberation Sans', sans-serif;line-height:13px;white-space:pre;color:#000;letter-spacing:0.000px;word-spacing:0.000px;-webkit-text-stroke:0.3px #000;">2</div>
<div style="position:absolute;left:424.00px;top:361.00px;font:bold 13px 'Liberation Sans', sans-serif;line-height:13px;white-space:pre;color:#000;letter-spacing:0.667px;word-spacing:0.000px;-webkit-text-stroke:0.3px #000;">$171.00</div>
<div style="position:absolute;left:528.00px;top:361.00px;font:bold 13px 'Liberation Sans', sans-serif;line-height:13px;white-space:pre;color:#000;letter-spacing:0.531px;word-spacing:0.000px;-webkit-text-stroke:0.3px #000;">14</div>
<div style="position:absolute;left:562.00px;top:361.00px;font:bold 13px 'Liberation Sans', sans-serif;line-height:13px;white-space:pre;color:#000;letter-spacing:0.531px;word-spacing:0.000px;-webkit-text-stroke:0.3px #000;">35</div>
<div style="position:absolute;left:607.00px;top:361.00px;font:bold 13px 'Liberation Sans', sans-serif;line-height:13px;white-space:pre;color:#000;letter-spacing:0.881px;word-spacing:0.000px;-webkit-text-stroke:0.3px #000;">40.00%</div>
<div style="position:absolute;left:62.00px;top:382.00px;font:bold 13px 'Liberation Sans', sans-serif;line-height:13px;white-space:pre;color:#000;letter-spacing:0.350px;word-spacing:3.476px;-webkit-text-stroke:0.3px #000;">Item 1 (1) : SUM(Col5) = 18, MIN(Col7...</div>
<div style="position:absolute;left:361.38px;top:382.00px;font:bold 13px 'Liberation Sans', sans-serif;line-height:13px;white-space:pre;color:#000;letter-spacing:0.000px;word-spacing:0.000px;-webkit-text-stroke:0.3px #000;">1</div>
<div style="position:absolute;left:432.00px;top:382.00px;font:bold 13px 'Liberation Sans', sans-serif;line-height:13px;white-space:pre;color:#000;letter-spacing:0.647px;word-spacing:0.000px;-webkit-text-stroke:0.3px #000;">$68.00</div>
<div style="position:absolute;left:535.77px;top:382.00px;font:bold 13px 'Liberation Sans', sans-serif;line-height:13px;white-space:pre;color:#000;letter-spacing:0.000px;word-spacing:0.000px;-webkit-text-stroke:0.3px #000;">9</div>
<div style="position:absolute;left:569.77px;top:382.00px;font:bold 13px 'Liberation Sans', sans-serif;line-height:13px;white-space:pre;color:#000;letter-spacing:0.000px;word-spacing:0.000px;-webkit-text-stroke:0.3px #000;">7</div>
<div style="position:absolute;left:599.00px;top:382.00px;font:bold 13px 'Liberation Sans', sans-serif;line-height:13px;white-space:pre;color:#000;letter-spacing:0.862px;word-spacing:0.000px;-webkit-text-stroke:0.3px #000;">128.57%</div>
<div style="position:absolute;left:181.05px;top:404.42px;font:12.5px 'Liberation Sans', sans-serif;line-height:12px;white-space:pre;color:#000;letter-spacing:0.000px;word-spacing:0.000px;">5</div>
<div style="position:absolute;left:337.05px;top:404.42px;font:12.5px 'Liberation Sans', sans-serif;line-height:12px;white-space:pre;color:#000;letter-spacing:0.000px;word-spacing:0.000px;">2</div>
<div style="position:absolute;left:399.00px;top:404.42px;font:12.5px 'Liberation Sans', sans-serif;line-height:12px;white-space:pre;color:#000;letter-spacing:-0.906px;word-spacing:0.000px;">18</div>
<div style="position:absolute;left:437.50px;top:404.42px;font:12.5px 'Liberation Sans', sans-serif;line-height:12px;white-space:pre;color:#000;letter-spacing:-0.147px;word-spacing:0.000px;">$68.00</div>
<div style="position:absolute;left:496.00px;top:404.42px;font:12.5px 'Liberation Sans', sans-serif;line-height:12px;white-space:pre;color:#000;letter-spacing:-0.906px;word-spacing:0.000px;">17</div>
<div style="position:absolute;left:536.05px;top:404.42px;font:12.5px 'Liberation Sans', sans-serif;line-height:12px;white-space:pre;color:#000;letter-spacing:0.000px;word-spacing:0.000px;">9</div>
<div style="position:absolute;left:570.05px;top:404.42px;font:12.5px 'Liberation Sans', sans-serif;line-height:12px;white-space:pre;color:#000;letter-spacing:0.000px;word-spacing:0.000px;">7</div>
<div style="position:absolute;left:607.50px;top:404.42px;font:12.5px 'Liberation Sans', sans-serif;line-height:12px;white-space:pre;color:#000;letter-spacing:-0.143px;word-spacing:0.000px;">128.57%</div>
<div style="position:absolute;left:62.00px;top:424.00px;font:bold 13px 'Liberation Sans', sans-serif;line-height:13px;white-space:pre;color:#000;letter-spacing:0.350px;word-spacing:3.476px;-webkit-text-stroke:0.3px #000;">Item 4 (1) : SUM(Col5) = 15, MIN(Col7...</div>
<div style="position:absolute;left:361.38px;top:424.00px;font:bold 13px 'Liberation Sans', sans-serif;line-height:13px;white-space:pre;color:#000;letter-spacing:0.000px;word-spacing:0.000px;-webkit-text-stroke:0.3px #000;">0</div>
<div style="position:absolute;left:432.00px;top:424.00px;font:bold 13px 'Liberation Sans', sans-serif;line-height:13px;white-space:pre;color:#000;letter-spacing:0.647px;word-spacing:0.000px;-webkit-text-stroke:0.3px #000;">$84.00</div>
<div style="position:absolute;left:535.77px;top:424.00px;font:bold 13px 'Liberation Sans', sans-serif;line-height:13px;white-space:pre;color:#000;letter-spacing:0.000px;word-spacing:0.000px;-webkit-text-stroke:0.3px #000;">4</div>
<div style="position:absolute;left:562.00px;top:424.00px;font:bold 13px 'Liberation Sans', sans-serif;line-height:13px;white-space:pre;color:#000;letter-spacing:0.531px;word-spacing:0.000px;-webkit-text-stroke:0.3px #000;">18</div>
<div style="position:absolute;left:607.00px;top:424.00px;font:bold 13px 'Liberation Sans', sans-serif;line-height:13px;white-space:pre;color:#000;letter-spacing:0.881px;word-spacing:0.000px;-webkit-text-stroke:0.3px #000;">22.22%</div>
<div style="position:absolute;left:175.00px;top:446.42px;font:12.5px 'Liberation Sans', sans-serif;line-height:12px;white-space:pre;color:#000;letter-spacing:-0.906px;word-spacing:0.000px;">20</div>
<div style="position:absolute;left:331.00px;top:446.42px;font:12.5px 'Liberation Sans', sans-serif;line-height:12px;white-space:pre;color:#000;letter-spacing:-0.906px;word-spacing:0.000px;">15</div>
<div style="position:absolute;left:399.00px;top:446.42px;font:12.5px 'Liberation Sans', sans-serif;line-height:12px;white-space:pre;color:#000;letter-spacing:-0.906px;word-spacing:0.000px;">15</div>
<div style="position:absolute;left:437.50px;top:446.42px;font:12.5px 'Liberation Sans', sans-serif;line-height:12px;white-space:pre;color:#000;letter-spacing:-0.147px;word-spacing:0.000px;">$84.00</div>
<div style="position:absolute;left:502.05px;top:446.42px;font:12.5px 'Liberation Sans', sans-serif;line-height:12px;white-space:pre;color:#000;letter-spacing:0.000px;word-spacing:0.000px;">9</div>
<div style="position:absolute;left:536.05px;top:446.42px;font:12.5px 'Liberation Sans', sans-serif;line-height:12px;white-space:pre;color:#000;letter-spacing:0.000px;word-spacing:0.000px;">4</div>
<div style="position:absolute;left:564.00px;top:446.42px;font:12.5px 'Liberation Sans', sans-serif;line-height:12px;white-space:pre;color:#000;letter-spacing:-0.906px;word-spacing:0.000px;">18</div>
<div style="position:absolute;left:614.50px;top:446.42px;font:12.5px 'Liberation Sans', sans-serif;line-height:12px;white-space:pre;color:#000;letter-spacing:-0.181px;word-spacing:0.000px;">22.22%</div>
<div style="position:absolute;left:62.00px;top:466.00px;font:bold 13px 'Liberation Sans', sans-serif;line-height:13px;white-space:pre;color:#000;letter-spacing:0.350px;word-spacing:3.476px;-webkit-text-stroke:0.3px #000;">Item 5 (1) : SUM(Col5) = 14, MIN(Col7...</div>
<div style="position:absolute;left:361.38px;top:466.00px;font:bold 13px 'Liberation Sans', sans-serif;line-height:13px;white-space:pre;color:#000;letter-spacing:0.000px;word-spacing:0.000px;-webkit-text-stroke:0.3px #000;">1</div>
<div style="position:absolute;left:432.00px;top:466.00px;font:bold 13px 'Liberation Sans', sans-serif;line-height:13px;white-space:pre;color:#000;letter-spacing:0.647px;word-spacing:0.000px;-webkit-text-stroke:0.3px #000;">$19.00</div>
<div style="position:absolute;left:535.77px;top:466.00px;font:bold 13px 'Liberation Sans', sans-serif;line-height:13px;white-space:pre;color:#000;letter-spacing:0.000px;word-spacing:0.000px;-webkit-text-stroke:0.3px #000;">1</div>
<div style="position:absolute;left:562.00px;top:466.00px;font:bold 13px 'Liberation Sans', sans-serif;line-height:13px;white-space:pre;color:#000;letter-spacing:0.531px;word-spacing:0.000px;-webkit-text-stroke:0.3px #000;">10</div>
<div style="position:absolute;left:607.00px;top:466.00px;font:bold 13px 'Liberation Sans', sans-serif;line-height:13px;white-space:pre;color:#000;letter-spacing:0.881px;word-spacing:0.000px;-webkit-text-stroke:0.3px #000;">10.00%</div>
<div style="position:absolute;left:719.00px;top:75.84px;font:12px 'Liberation Sans', sans-serif;line-height:12px;white-space:pre;color:#000;letter-spacing:0.232px;word-spacing:0.000px;">Grouping</div>
<div style="position:absolute;left:734.00px;top:98.84px;font:12px 'Liberation Sans', sans-serif;line-height:12px;white-space:pre;color:#000;letter-spacing:0.414px;word-spacing:0.000px;">In-Column Group Summaries</div>
<div style="position:absolute;left:734.00px;top:124.84px;font:12px 'Liberation Sans', sans-serif;line-height:12px;white-space:pre;color:#000;letter-spacing:0.464px;word-spacing:0.000px;">Group Title Summaries</div>
<div style="position:absolute;left:792.00px;top:158.84px;font:12px 'Liberation Sans', sans-serif;line-height:12px;white-space:pre;color:#000;letter-spacing:0.328px;word-spacing:0.000px;">Regroup</div>
<div style="position:absolute;left:718.00px;top:222.84px;font:12px 'Liberation Sans', sans-serif;line-height:12px;white-space:pre;color:#000;letter-spacing:0.543px;word-spacing:0.000px;">Column Width Adjustment</div>
<div style="position:absolute;left:753.00px;top:253.84px;font:12px 'Liberation Sans', sans-serif;line-height:12px;white-space:pre;color:#000;letter-spacing:0.410px;word-spacing:0.000px;">Auto Width All Columns</div>
<div style="position:absolute;left:735.00px;top:296.84px;font:12px 'Liberation Sans', sans-serif;line-height:12px;white-space:pre;color:#000;letter-spacing:0.486px;word-spacing:0.000px;">Auto Width Row Text Column</div>
<div style="position:absolute;left:25.50px;top:500.84px;font:12px 'Liberation Sans', sans-serif;line-height:12px;white-space:pre;color:#000;letter-spacing:0.376px;word-spacing:0.000px;">Custom Group Row Formatting (Regroup Grid to See)</div>
<div style="position:absolute;left:25.50px;top:524.84px;font:12px 'Liberation Sans', sans-serif;line-height:12px;white-space:pre;color:#000;letter-spacing:0.427px;word-spacing:0.000px;">Custom Tooltips for Cells in Group Rows with Summaries</div>
<div style="position:absolute;left:25.50px;top:548.84px;font:12px 'Liberation Sans', sans-serif;line-height:12px;white-space:pre;color:#000;letter-spacing:0.359px;word-spacing:0.000px;">Custom Group Values for Col0 (Regroup Grid to See)</div>
<div style="position:absolute;left:25.50px;top:572.84px;font:12px 'Liberation Sans', sans-serif;line-height:12px;white-space:pre;color:#000;letter-spacing:0.327px;word-spacing:0.000px;">Calculate Summaries Only for Checked Rows</div>
<div style="position:absolute;left:392.00px;top:500.84px;font:12px 'Liberation Sans', sans-serif;line-height:12px;white-space:pre;color:#000;letter-spacing:0.234px;word-spacing:0.000px;">Row Mode</div>
<div style="position:absolute;left:392.00px;top:524.84px;font:12px 'Liberation Sans', sans-serif;line-height:12px;white-space:pre;color:#a0a0a0;letter-spacing:0.317px;word-spacing:0.000px;">Row Mode Has Current Cell</div>
<div style="position:absolute;left:392.00px;top:548.84px;font:12px 'Liberation Sans', sans-serif;line-height:12px;white-space:pre;color:#000;letter-spacing:0.294px;word-spacing:0.000px;">Display Row Text Cells</div>
<div style="position:absolute;left:392.00px;top:572.84px;font:12px 'Liberation Sans', sans-serif;line-height:12px;white-space:pre;color:#000;letter-spacing:0.310px;word-spacing:0.000px;">Multi-Select Mode</div>
<div style="position:absolute;left:594.00px;top:500.84px;font:12px 'Liberation Sans', sans-serif;line-height:12px;white-space:pre;color:#000;letter-spacing:0.153px;word-spacing:0.000px;">Thick Grid Lines</div>
<div style="position:absolute;left:594.00px;top:524.84px;font:12px 'Liberation Sans', sans-serif;line-height:12px;white-space:pre;color:#000;letter-spacing:0.228px;word-spacing:0.000px;">Freeze Columns</div>
<div style="position:absolute;left:594.00px;top:548.84px;font:12px 'Liberation Sans', sans-serif;line-height:12px;white-space:pre;color:#000;letter-spacing:0.414px;word-spacing:0.000px;">Right-to-Left</div>
<div style="position:absolute;left:594.00px;top:572.84px;font:12px 'Liberation Sans', sans-serif;line-height:12px;white-space:pre;color:#000;letter-spacing:0.062px;word-spacing:0.000px;">Footer</div>
<div style="position:absolute;left:4.00px;top:603.84px;font:12px 'Liberation Sans', sans-serif;line-height:12px;white-space:pre;color:#000;letter-spacing:0.421px;word-spacing:0.000px;">Last Cell Event: CellMouseLeave (0, 8) {X=505,Y=58,Width=34,Height=21}</div>
<div style="position:absolute;left:441.00px;top:603.84px;font:12px 'Liberation Sans', sans-serif;line-height:12px;white-space:pre;color:#000;letter-spacing:0.387px;word-spacing:0.000px;">Current Cell:</div>
</div><div id="b"></div></body></html>
